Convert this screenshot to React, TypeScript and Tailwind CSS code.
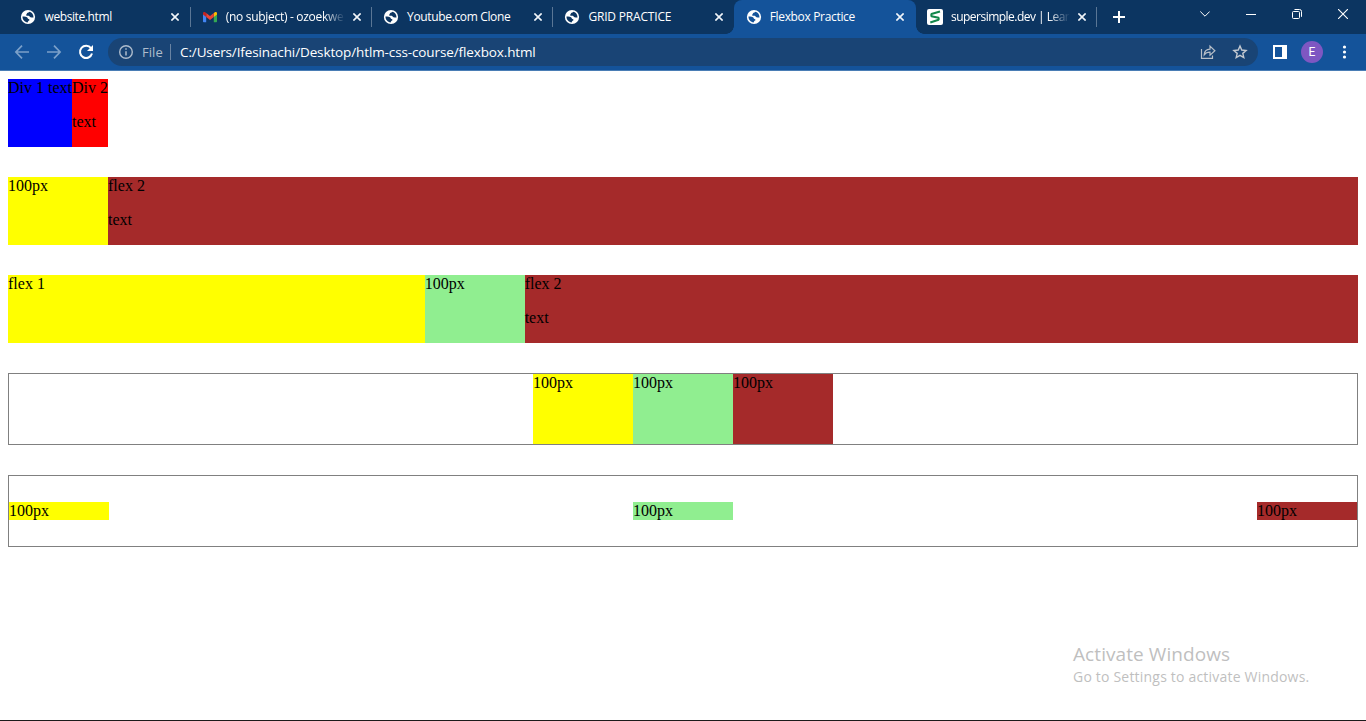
import React from "react";

const ui = "font-['Open_Sans','Noto_Sans',sans-serif]";

function Globe() {
  return (
    <svg className="shrink-0" width="16" height="16" viewBox="0 0 16 16" fill="none">
      <circle cx="8" cy="8" r="7.1" fill="#fff" />
      <path
        d="M2.500 7.600C4 7.500 5.900 7.400 7 8.200c.9.600.5 1.500 1.500 1.700 1 .1 1.300 1.100.6 1.700-.8.400-1.100 1.100-1.500 1.900C4.700 13.300 2.400 10.900 2.500 7.600Z M9.500 2.700C8.900 3.500 7.800 3.300 7.200 4c-.6.600-.1 1.100-.9 1.500-.5.500-.2 1.200.6 1.200h1.700c1.100 0 1 1.400 2 1.500.9.100 1.700.5 2.900.2C13.600 5.700 12 3.400 9.500 2.700Z"
        className="fill-[var(--tab)]"
      />
    </svg>
  );
}

function Gmail() {
  return (
    <svg className="shrink-0" width="16" height="16" viewBox="0 0 16 16">
      <path d="M1 4.200V12.500q0 .8.800.8H4.200V6.700Z" fill="#4285f4" />
      <path d="M15 4.200V12.500q0 .8-.8.8H11.800V6.700Z" fill="#34a853" />
      <path d="M11.800 4.100 12.900 3.200C13.800 2.600 15 3.200 15 4.300V5.600L11.800 8Z" fill="#fbbc04" />
      <path d="M4.200 8V4.100L8 7l3.800-2.900V8L8 10.900Z" fill="#ea4335" />
      <path d="M1 4.300C1 3.200 2.200 2.600 3.100 3.200L4.200 4.100V8L1 5.600Z" fill="#c5221f" />
    </svg>
  );
}

function SimpleLogo() {
  return (
    <svg className="shrink-0" width="16" height="16" viewBox="0 0 16 16">
      <rect width="16" height="16" rx="2" fill="#fff" />
      <path d="M13 2.500 4.400 5V7.200L11.600 8.800V10.800L3.300 13.500" fill="none" stroke="#12874b" strokeWidth="2.100" strokeLinejoin="bevel" />
    </svg>
  );
}

function Close() {
  return (
    <svg className="shrink-0" width="8" height="8" viewBox="0 0 8 8" stroke="#f1f5fa" strokeWidth="1.600">
      <path d="M.4.4 7.600 7.600M7.600.4.4 7.600" />
    </svg>
  );
}

type TabProps = { title: string; icon: "globe" | "gmail" | "simple"; active?: boolean; sep?: boolean; fade?: boolean; tracking: string };

function Tab({ title, icon, active, sep, fade, tracking }: TabProps) {
  return (
    <div
      className={`relative flex h-[34px] w-[181.300px] shrink-0 items-center pl-[11.200px] ${
        active ? "rounded-t-lg bg-[#14539a] [--tab:#14539a]" : "[--tab:#0c3561]"
      }`}
    >
      {active && (
        <>
          <span className="absolute bottom-0 -left-2 size-2 bg-[radial-gradient(circle_at_0_0,transparent_7.500px,#14539a_8px)]" />
          <span className="absolute -right-2 bottom-0 size-2 bg-[radial-gradient(circle_at_100%_0,transparent_7.500px,#14539a_8px)]" />
        </>
      )}
      {icon === "globe" ? <Globe /> : icon === "gmail" ? <Gmail /> : <SimpleLogo />}
      <span
        className={`ml-2 w-[119px] text-[12px] leading-4 whitespace-nowrap text-white ${tracking} ${
          fade ? "[mask-image:linear-gradient(to_right,#000_98px,transparent_119px)]" : ""
        }`}
      >
        {title}
      </span>
      <span className="ml-[7.800px] flex">
        <Close />
      </span>
      {sep && <span className="absolute top-[7px] right-0 h-5 w-px bg-[#5a7695]" />}
    </div>
  );
}

function TabStrip() {
  return (
    <div className="flex h-[34px] items-center bg-[#0c3561] pl-[9.300px]">
      <Tab title="website.html" icon="globe" sep tracking="tracking-[-0.400px]" />
      <Tab title="(no subject) - ozoekwe" icon="gmail" sep fade tracking="tracking-[-0.300px]" />
      <Tab title="Youtube.com Clone" icon="globe" sep tracking="tracking-[-0.350px]" />
      <Tab title="GRID PRACTICE" icon="globe" tracking="tracking-[-0.180px]" />
      <Tab title="Flexbox Practice" icon="globe" active tracking="tracking-[-0.330px]" />
      <Tab title="supersimple.dev | Lear" icon="simple" sep fade tracking="tracking-[-0.520px]" />
      <svg className="ml-[15.900px]" width="12" height="12" viewBox="0 0 12 12" stroke="#fff" strokeWidth="2">
        <path d="M6 0V12M0 6H12" />
      </svg>
      <div className="mr-[18px] mb-[6px] ml-auto flex items-center gap-[36px]">
        <svg width="10" height="10" viewBox="0 0 10 10" fill="none" stroke="#fff">
          <path d="m.3 2.500 4.700 4.700 4.700-4.700" />
        </svg>
        <svg width="10" height="10" viewBox="0 0 10 10" stroke="#fff">
          <path d="M0 5.500H10" />
        </svg>
        <svg width="10" height="10" viewBox="0 0 10 10" fill="none" stroke="#fff">
          <rect x=".5" y="2.500" width="7" height="7" rx="1" />
          <path d="M2.500.5H7.500Q9.500.5 9.500 2.500V7.800" />
        </svg>
        <svg width="10" height="10" viewBox="0 0 10 10" stroke="#fff" strokeWidth="1.100">
          <path d="M0 0 10 10M10 0 0 10" />
        </svg>
      </div>
    </div>
  );
}

function Toolbar() {
  return (
    <div className="flex h-[37px] items-center border-b border-[#4a7db5] bg-[#14539a] pl-[14px]">
      <svg width="16" height="16" viewBox="0 0 16 16" fill="none" stroke="#7ba0c9" strokeWidth="1.700">
        <path d="M15 8H2M8 1.600 1.900 8 8 14.400" />
      </svg>
      <svg className="ml-4" width="16" height="16" viewBox="0 0 16 16" fill="none" stroke="#7ba0c9" strokeWidth="1.700">
        <path d="M1 8H14M8 1.600 14.100 8 8 14.400" />
      </svg>
      <svg className="ml-4" width="16" height="16" viewBox="0 0 16 16" fill="none">
        <path d="M13 4.200A6.100 6.100 0 1 0 14 9.500" stroke="#fff" strokeWidth="2" />
        <path d="M15 1V7H9Z" fill="#fff" />
      </svg>
      <div className="ml-[14px] flex h-7 w-[1150px] items-center rounded-full bg-[#194475] pr-[10px] pl-[10px]">
        <svg width="16" height="16" viewBox="0 0 16 16" fill="none" stroke="#aebccc" strokeWidth="1.400">
          <circle cx="8" cy="8" r="6.300" />
          <path d="M8 7.200V11.600M8 4.300V5.800" strokeWidth="1.500" />
        </svg>
        <span className="ml-2 w-[28px] text-[13px] leading-4 tracking-[0.050px] text-[#aebccc]">File</span>
        <span className="h-4 w-px bg-[#6983a2]" />
        <span className="ml-[9px] text-[13.500px] leading-4 tracking-[-0.120px] whitespace-nowrap text-white">
          C:/Users/Ifesinachi/Desktop/htlm-css-course/flexbox.html
        </span>
        <svg className="ml-auto" width="16" height="16" viewBox="0 0 16 16" fill="none" stroke="#b8bfc8" strokeWidth="1.200">
          <path d="M1.500 5V14.400H12.500V11.500" />
          <path d="M4.200 10.800C4.400 7.200 6.600 5.200 10 5.100V2.100L14.900 6.700 10 11.100V8.200C7.300 8.200 5.500 9 4.200 10.800Z" />
        </svg>
        <svg className="ml-4" width="16" height="16" viewBox="0 0 16 16" fill="none" stroke="#c3c9d1" strokeWidth="1.400">
          <path d="m8 2 1.750 4.050 4.350.4-3.300 2.900 1 4.300L8 11.400l-3.800 2.250 1-4.300L1.900 6.450l4.350-.4Z" />
        </svg>
      </div>
      <svg className="ml-[15px]" width="14" height="14" viewBox="0 0 14 14">
        <path d="M0 0H14V14H0ZM2 2V12H9V2Z" fill="#fff" fillRule="evenodd" />
      </svg>
      <div className="ml-[14px] flex size-[22px] items-center justify-center rounded-full bg-[#7e57c2] font-['Roboto',sans-serif] text-[12px] text-white">
        E
      </div>
      <svg className="ml-[19px]" width="5" height="14" viewBox="0 0 5 14" fill="#fff">
        <circle cx="2.500" cy="2" r="1.600" />
        <circle cx="2.500" cy="7" r="1.600" />
        <circle cx="2.500" cy="12" r="1.600" />
      </svg>
    </div>
  );
}

function Page() {
  return (
    <main className="flex grow flex-col gap-[30px] p-2 font-['Liberation_Serif',serif] text-[16px] leading-[18px] text-black">
      <div className="flex w-[100px]">
        <div className="w-16 shrink-0 bg-[blue] whitespace-nowrap">Div 1 text</div>
        <div className="w-9 bg-[red] whitespace-nowrap">
          Div 2<p className="my-4">text</p>
        </div>
      </div>
      <div className="flex">
        <div className="w-[100px] bg-[yellow]">100px</div>
        <div className="flex-1 bg-[brown]">
          flex 2<p className="my-4">text</p>
        </div>
      </div>
      <div className="flex">
        <div className="flex-1 bg-[yellow]">flex 1</div>
        <div className="w-[100px] bg-[lightgreen]">100px</div>
        <div className="flex-[2] bg-[brown]">
          flex 2<p className="my-4">text</p>
        </div>
      </div>
      <div className="flex h-[72px] justify-center border border-[gray]">
        <div className="w-[100px] bg-[yellow]">100px</div>
        <div className="w-[100px] bg-[lightgreen]">100px</div>
        <div className="w-[100px] bg-[brown]">100px</div>
      </div>
      <div className="flex h-[72px] items-center justify-between border border-[gray]">
        <div className="w-[100px] bg-[yellow]">100px</div>
        <div className="w-[100px] bg-[lightgreen]">100px</div>
        <div className="w-[100px] bg-[brown]">100px</div>
      </div>
    </main>
  );
}

export default function App() {
  return (
    <div className={`relative flex h-[721px] w-[1366px] flex-col overflow-hidden border-b border-[#1b1b1b] bg-white ${ui}`}>
      <TabStrip />
      <Toolbar />
      <Page />
      <div className="absolute top-[642px] left-[1073px] whitespace-nowrap text-[#bfbfbf]">
        <div className="text-[19px] leading-6 tracking-[0.080px]">Activate Windows</div>
        <div className="text-[14px] leading-[22px] tracking-[0.200px]">Go to Settings to activate Windows.</div>
      </div>
    </div>
  );
}
